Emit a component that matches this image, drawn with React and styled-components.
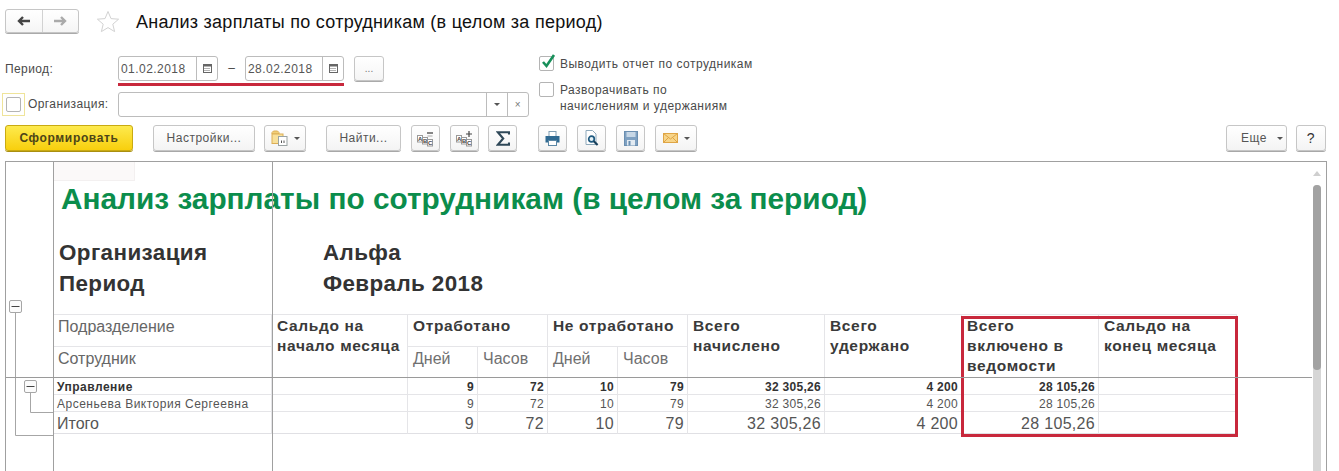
import React from "react";
import styled, { createGlobalStyle } from "styled-components";

const Global = createGlobalStyle`
  html, body { margin: 0; padding: 0; background: #fff; }
  body { font-family: "Liberation Sans", Arial, sans-serif; color: #444; overflow: hidden; }
  #root { height: 471px; overflow: hidden; }
  * { box-sizing: border-box; }
`;

const Page = styled.div`
  width: 1339px;
  height: 471px;
  overflow: hidden;
`;

const Header = styled.header`
  display: flex;
  align-items: center;
  height: 24px;
  margin: 9px 0 0 5px;
`;
const NavGroup = styled.div`
  display: flex;
  width: 74px;
  height: 24px;
  border: 1px solid #c6c6c6;
  border-radius: 3px;
  box-shadow: 0 1px 0 #aaa;
  background: linear-gradient(#fff, #f5f5f5);
`;
const NavButton = styled.div`
  flex: 1;
  display: flex;
  align-items: center;
  justify-content: center;
  & + & { border-left: 1px solid #d2d2d2; }
`;
const StarSlot = styled.div`
  display: flex;
  margin-left: 17px;
  width: 24px;
`;
const PageTitle = styled.h1`
  margin: 3px 0 0 16px;
  font-size: 18px;
  font-weight: 400;
  color: #111;
  letter-spacing: 0.26px;
`;

const Form = styled.section`
  display: flex;
  height: 60px;
  margin-top: 23px;
`;
const FormLeft = styled.div`
  width: 529px;
  margin-left: 2px;
`;
const FieldRow = styled.div`
  display: flex;
  align-items: flex-start;
  height: 26px;
`;
const OrgRow = styled(FieldRow)`
  align-items: center;
  margin-top: 10px;
  height: 24px;
`;
const Label = styled.span`
  font-size: 12px;
  letter-spacing: 0.4px;
  color: #4a4a4a;
`;
const PeriodLabel = styled(Label)`
  width: 116px;
  padding: 6px 0 0 3px;
`;
const DateRange = styled.div`
  display: flex;
  align-items: flex-start;
  height: 30px;
  border-bottom: 3px solid #c8283c;
  width: 226px;
`;
const FieldBox = styled.div`
  display: flex;
  height: 25px;
  width: ${(p) => p.$w}px;
  border: 1px solid #bcbcbc;
  border-radius: 3px;
  background: #fff;
  font-size: 12px;
  letter-spacing: 0.45px;
  color: #555;
`;
const FieldText = styled.div`
  flex: 1;
  display: flex;
  align-items: center;
  padding-left: 2px;
`;
const FieldAddon = styled.div`
  width: 21px;
  display: flex;
  align-items: center;
  justify-content: center;
  border-left: 1px solid #bcbcbc;
  color: #777;
  font-size: 10px;
`;
const Dash = styled.span`
  width: 27px;
  line-height: 25px;
  text-align: center;
  font-size: 12px;
  color: #444;
`;
const MoreButton = styled.div`
  margin-left: 10px;
  width: 30px;
  height: 25px;
  display: flex;
  align-items: center;
  justify-content: center;
  border: 1px solid #c6c6c6;
  border-radius: 3px;
  box-shadow: 0 1px 0 #aaa;
  background: linear-gradient(#fff, #f5f5f5);
  font-size: 10px;
  color: #777;
`;
const UseBox = styled.div`
  width: 23px;
  height: 23px;
  display: flex;
  align-items: center;
  justify-content: center;
  border: 1px solid #efe49a;
`;
const Check = styled.div`
  width: 15px;
  height: 15px;
  border: 1px solid #b4b4b4;
  border-radius: 2px;
  background: #fff;
  position: relative;
  flex: none;
`;
const CheckMark = styled.svg`
  position: absolute;
  left: 0;
  top: -4px;
`;
const OrgLabel = styled(Label)`
  width: 93px;
  padding-left: 3px;
`;

const FormRight = styled.div`
  margin-left: 8px;
`;
const CheckRow = styled.div`
  display: flex;
  align-items: flex-start;
  gap: 6px;
  font-size: 12px;
  letter-spacing: 0.48px;
  line-height: 16px;
  color: #4a4a4a;
  margin-top: ${(p) => p.$mt || 0}px;
`;

const Toolbar = styled.div`
  display: flex;
  align-items: stretch;
  height: 26px;
  margin: 9px 0 0 5px;
  width: 1321px;
`;
const Button = styled.div`
  display: flex;
  align-items: center;
  justify-content: center;
  gap: 6px;
  width: ${(p) => p.$w}px;
  margin-left: ${(p) => p.$ml || 0}px;
  border: 1px solid #c6c6c6;
  border-radius: 3px;
  box-shadow: 0 1px 0 #a8a8a8;
  background: linear-gradient(#fff, #f4f4f4);
  font-size: 12px;
  letter-spacing: 0.5px;
  color: #555;
`;
const PrimaryButton = styled(Button)`
  border-color: #c9aa12;
  box-shadow: 0 1px 0 #a98f10;
  background: linear-gradient(#fdea4e, #f8cf0d);
  color: #4c4418;
  font-weight: 700;
  letter-spacing: 0.65px;
`;
const MoreMenuButton = styled(Button)`
  gap: 10px;
  padding-left: 11px;
`;
const Spacer = styled.div`
  flex: 1;
`;
const Caret = styled.span`
  width: 0;
  height: 0;
  border-left: 3px solid transparent;
  border-right: 3px solid transparent;
  border-top: 3px solid #555;
`;
const HelpButton = styled(Button)`
  font-size: 14px;
  color: #333;
`;

const Panel = styled.section`
  position: relative;
  display: flex;
  width: 1322px;
  height: 320px;
  margin: 10px 0 0 5px;
  border: 1px solid #a0a0a0;
  border-bottom: 0;
`;
const HeaderRule = styled.div`
  position: absolute;
  left: 0;
  top: 215px;
  width: 1306px;
  height: 1px;
  background: #9a9a9a;
`;
const Gutter = styled.div`
  width: 48px;
  flex: none;
  border-right: 1px solid #a0a0a0;
`;
const Sheet = styled.div`
  position: relative;
  flex: 1;
`;
const ColumnGuide = styled.div`
  position: absolute;
  left: 218px;
  top: 0;
  bottom: 0;
  width: 1px;
  background: #a0a0a0;
`;
const CornerCell = styled.div`
  width: 81px;
  height: 19px;
  background: #fbf9f9;
  border-bottom: 1px solid #f3f0f0;
  border-right: 1px solid #f3f0f0;
`;
const ReportTitle = styled.h2`
  margin: 0;
  padding-left: 7px;
  font-size: 29.8px;
  line-height: 36px;
  font-weight: 700;
  color: #0b8d4c;
  white-space: nowrap;
`;
const Info = styled.div`
  margin: 20px 0 15px;
`;
const InfoRow = styled.div`
  display: grid;
  grid-template-columns: 264px auto;
  padding-left: 5px;
  height: 31px;
  align-items: center;
  font-size: 22.4px;
  font-weight: 700;
  letter-spacing: 0.4px;
  color: #333;
`;
const Table = styled.div`
  display: grid;
  grid-template-columns: 218px 136px 70px 70px 70px 70px 137px 137px 137px 138px;
  grid-template-rows: 32px 31px 17px 17px 23px;
  width: 1183px;
`;
const Cell = styled.div`
  border-top: 1px solid ${(p) => (p.$strong ? "#9a9a9a" : "#e5e5e8")};
  border-right: 1px solid #e5e5e8;
  ${(p) => p.$last && "border-bottom: 1px solid #e0e0e4;"}
  ${(p) => p.$span && `grid-column: span ${p.$span};`}
  ${(p) => p.$rowSpan && `grid-row: span ${p.$rowSpan};`}
  overflow: hidden;
  white-space: nowrap;
`;
const Axis = styled(Cell)`
  padding: 2px 0 0 4px;
  font-size: 16px;
  line-height: 20px;
  color: #666;
`;
const Head = styled(Cell)`
  padding: 1px 0 0 5px;
  font-size: 15.5px;
  line-height: 20px;
  font-weight: 700;
  letter-spacing: 0.65px;
  color: #3a3a3a;
  white-space: pre-line;
`;
const SubHead = styled(Cell)`
  padding: 2px 0 0 5px;
  font-size: 16px;
  line-height: 20px;
  color: #707070;
`;
const RowName = styled(Cell)`
  padding: 1px 0 0 3px;
  font-size: ${(p) => p.$size}px;
  font-weight: ${(p) => (p.$bold ? 700 : 400)};
  line-height: ${(p) => p.$lh}px;
  letter-spacing: ${(p) => (p.$size > 13 ? 0 : 0.5)}px;
  color: ${(p) => (p.$bold ? "#333" : "#555")};
`;
const Num = styled(Cell)`
  padding: 1px 3px 0 0;
  text-align: right;
  font-size: ${(p) => p.$size}px;
  font-weight: ${(p) => (p.$bold ? 700 : 400)};
  line-height: ${(p) => p.$lh}px;
  letter-spacing: 0.3px;
  color: ${(p) => (p.$bold ? "#333" : "#555")};
`;
const Highlight = styled.div`
  position: absolute;
  left: 907px;
  top: 154px;
  width: 277px;
  height: 121px;
  border: 3px solid #c8283c;
  pointer-events: none;
`;
const ScrollColumn = styled.div`
  position: relative;
  width: 15px;
  flex: none;
`;
const ScrollArrow = styled.div`
  position: absolute;
  left: 2px;
  top: 9px;
  border-left: 4px solid transparent;
  border-right: 4px solid transparent;
  border-bottom: 5px solid #cfcfcf;
`;
const ScrollTrack = styled.div`
  position: absolute;
  left: 2px;
  top: 23px;
  bottom: 0;
  width: 8px;
  background: #d6d6d6;
  border-radius: 4px 4px 0 0;
`;
const ScrollThumb = styled.div`
  height: 185px;
  background: #a2a2a2;
  border-radius: 4px;
`;
const TileLetter = styled.text`
  font-family: "Liberation Sans", Arial, sans-serif;
  font-size: 6px;
  font-weight: 700;
  fill: #444;
`;

const ArrowIcon = ({ dir, color }) => (
  <svg width="14" height="10" viewBox="0 0 14 10">
    <path d={dir === "l" ? "M6 1 2 5l4 4M2 5h11" : "M8 1l4 4-4 4M12 5H1"} fill="none" stroke={color} strokeWidth="2.4" />
  </svg>
);
const Star = () => (
  <svg width="24" height="23" viewBox="0 0 24 23">
    <path d="M12 1.5 15 8.6l7.6.6-5.8 5 1.8 7.4L12 17.6l-6.6 4 1.8-7.4-5.8-5L9 8.6z" fill="#fff" stroke="#d2d2d2" />
  </svg>
);
const Calendar = () => (
  <svg width="11" height="11" viewBox="0 0 11 11">
    <rect x="1.5" y="1.5" width="8" height="8" fill="#fff" stroke="#666" />
    <rect x="1" y="1" width="9" height="2.5" fill="#666" />
    <path d="M2.5 5.5h6M2.5 7.5h6" stroke="#666" strokeDasharray="1 1" />
  </svg>
);
const ReportFolder = () => (
  <svg width="17" height="16" viewBox="0 0 17 16">
    <path d="M1 4V2.5L2.5 1h4L8 2.5V4z" fill="#f1cf78" stroke="#dcae55" />
    <rect x="1" y="4" width="11" height="9.5" fill="#f8e09a" stroke="#dcae55" />
    <rect x="7.5" y="6.5" width="8.5" height="9" fill="#fff" stroke="#9aa3a3" />
    <path d="M10.5 13v-2.5M13 13v-2.5" stroke="#555" />
  </svg>
);
const AbcIcon = ({ plus }) => (
  <svg width="17" height="17" viewBox="0 0 17 17">
    <rect x=".5" y="5.5" width="5" height="6.5" fill="#fff" stroke="#9a9a9a" />
    <rect x="5.5" y="7.5" width="5" height="6.5" fill="#fff" stroke="#9a9a9a" />
    <rect x="10.5" y="9.5" width="5" height="6.5" fill="#fff" stroke="#9a9a9a" />
    <TileLetter x="1" y="11">А</TileLetter>
    <TileLetter x="6" y="13">В</TileLetter>
    <TileLetter x="11" y="15">С</TileLetter>
    {plus ? (
      <path d="M10 4h6M13 1v6" stroke="#444" strokeWidth="1.2" />
    ) : (
      <>
        <path d="M10 3h6" stroke="#444" strokeWidth="1.3" />
        <path d="M10.5 6h5" stroke="#aaa" />
      </>
    )}
  </svg>
);
const Sigma = () => (
  <svg width="14" height="15" viewBox="0 0 14 15">
    <path d="M13 3.5V1.3H1.8L7.2 7.5 1.8 13.7H13v-2.2" fill="none" stroke="#2f4858" strokeWidth="2.1" />
  </svg>
);
const Printer = () => (
  <svg width="15" height="15" viewBox="0 0 15 15">
    <rect x="4" y=".5" width="7" height="5" fill="#fff" stroke="#7f9db3" />
    <path d="M.5 5h14v6.5H12V9H3v2.5H.5z" fill="#2f6a92" />
    <rect x="3.5" y="9.5" width="8" height="5" fill="#fff" stroke="#5b87a5" />
  </svg>
);
const Preview = () => (
  <svg width="14" height="16" viewBox="0 0 14 16">
    <path d="M1 .5h6.5L11 4v10.5H1z" fill="#fff" stroke="#8fa9bb" />
    <circle cx="6.5" cy="9" r="2.8" fill="#e4f1f6" stroke="#1f5a80" strokeWidth="1.7" />
    <path d="M8.8 11.2l3.8 3.8" stroke="#173f5a" strokeWidth="2.1" />
  </svg>
);
const Save = () => (
  <svg width="14" height="15" viewBox="0 0 14 15">
    <rect x=".5" y=".5" width="13" height="14" fill="#7fa1c2" stroke="#6b8fb1" />
    <rect x="2.5" y="1" width="9" height="5" fill="#c7d7e6" />
    <rect x="3" y="9" width="8" height="5.5" fill="#e3ebf2" />
    <rect x="4.5" y="10" width="2" height="4.5" fill="#6b8fb1" />
  </svg>
);
const Mail = () => (
  <svg width="15" height="10" viewBox="0 0 15 10">
    <rect x=".5" y=".5" width="14" height="9" fill="#f7d58a" stroke="#dfa545" />
    <path d="M.5.5 7.5 6l7-5.5M.5 9.5 5.5 4.5M14.5 9.5 9.5 4.5" fill="none" stroke="#dfa545" />
  </svg>
);
const Tree = () => (
  <svg width="47" height="310" viewBox="0 0 47 310">
    <g fill="none" stroke="#a6a6a6">
      <path d="M9.5 150v123.5H47" />
      <path d="M24.5 230v20.5H47" />
      <rect x="3.5" y="138.5" width="12" height="12" rx="1.5" fill="#fbfbfb" />
      <rect x="18.5" y="218.5" width="12" height="12" rx="1.5" fill="#fbfbfb" />
    </g>
    <path d="M5.5 144.5h8M20.5 224.5h8" stroke="#444" />
  </svg>
);

const values = ["", "9", "72", "10", "79", "32 305,26", "4 200", "28 105,26", ""];
const rows = [
  { name: "Управление", bold: true, size: 12, lh: 16, strong: true },
  { name: "Арсеньева Виктория Сергеевна", size: 12, lh: 16 },
  { name: "Итого", size: 16, lh: 22, last: true },
];

export default function App() {
  return (
    <Page>
      <Global />
      <Header>
        <NavGroup>
          <NavButton><ArrowIcon dir="l" color="#444" /></NavButton>
          <NavButton><ArrowIcon dir="r" color="#aaa" /></NavButton>
        </NavGroup>
        <StarSlot><Star /></StarSlot>
        <PageTitle>Анализ зарплаты по сотрудникам (в целом за период)</PageTitle>
      </Header>

      <Form>
        <FormLeft>
          <FieldRow>
            <PeriodLabel>Период:</PeriodLabel>
            <DateRange>
              <FieldBox $w={100}>
                <FieldText>01.02.2018</FieldText>
                <FieldAddon><Calendar /></FieldAddon>
              </FieldBox>
              <Dash>–</Dash>
              <FieldBox $w={99}>
                <FieldText>28.02.2018</FieldText>
                <FieldAddon><Calendar /></FieldAddon>
              </FieldBox>
            </DateRange>
            <MoreButton>...</MoreButton>
          </FieldRow>
          <OrgRow>
            <UseBox><Check /></UseBox>
            <OrgLabel>Организация:</OrgLabel>
            <FieldBox $w={411}>
              <FieldText />
              <FieldAddon><Caret /></FieldAddon>
              <FieldAddon>×</FieldAddon>
            </FieldBox>
          </OrgRow>
        </FormLeft>
        <FormRight>
          <CheckRow>
            <Check>
              <CheckMark width="16" height="17" viewBox="0 0 16 17">
                <path d="M3 9l3.5 4L14 2" fill="none" stroke="#17905a" strokeWidth="2.6" />
              </CheckMark>
            </Check>
            <span>Выводить отчет по сотрудникам</span>
          </CheckRow>
          <CheckRow $mt={10}>
            <Check />
            <span>Разворачивать по<br />начислениям и удержаниям</span>
          </CheckRow>
        </FormRight>
      </Form>

      <Toolbar>
        <PrimaryButton $w={128}>Сформировать</PrimaryButton>
        <Button $w={102} $ml={20}>Настройки...</Button>
        <Button $w={42} $ml={9}><ReportFolder /><Caret /></Button>
        <Button $w={75} $ml={20}>Найти...</Button>
        <Button $w={29} $ml={10}><AbcIcon /></Button>
        <Button $w={29} $ml={10}><AbcIcon plus /></Button>
        <Button $w={29} $ml={9}><Sigma /></Button>
        <Button $w={29} $ml={21}><Printer /></Button>
        <Button $w={29} $ml={10}><Preview /></Button>
        <Button $w={29} $ml={10}><Save /></Button>
        <Button $w={42} $ml={10}><Mail /><Caret /></Button>
        <Spacer />
        <MoreMenuButton $w={61}>Еще<Caret /></MoreMenuButton>
        <HelpButton $w={30} $ml={9}>?</HelpButton>
      </Toolbar>

      <Panel>
        <Gutter><Tree /></Gutter>
        <Sheet>
          <CornerCell />
          <ReportTitle>Анализ зарплаты по сотрудникам (в целом за период)</ReportTitle>
          <Info>
            <InfoRow><span>Организация</span><span>Альфа</span></InfoRow>
            <InfoRow><span>Период</span><span>Февраль 2018</span></InfoRow>
          </Info>
          <Table>
            <Axis>Подразделение</Axis>
            <Head $rowSpan={2}>{"Сальдо на\nначало месяца"}</Head>
            <Head $span={2}>Отработано</Head>
            <Head $span={2}>Не отработано</Head>
            <Head $rowSpan={2}>{"Всего\nначислено"}</Head>
            <Head $rowSpan={2}>{"Всего\nудержано"}</Head>
            <Head $rowSpan={2}>{"Всего\nвключено в\nведомости"}</Head>
            <Head $rowSpan={2}>{"Сальдо на\nконец месяца"}</Head>
            <Axis>Сотрудник</Axis>
            <SubHead>Дней</SubHead>
            <SubHead>Часов</SubHead>
            <SubHead>Дней</SubHead>
            <SubHead>Часов</SubHead>
            {rows.map((r) => (
              <React.Fragment key={r.name}>
                <RowName $bold={r.bold} $size={r.size} $lh={r.lh} $strong={r.strong} $last={r.last}>{r.name}</RowName>
                {values.map((n, i) => (
                  <Num key={i} $bold={r.bold} $size={r.size} $lh={r.lh} $strong={r.strong} $last={r.last}>{n}</Num>
                ))}
              </React.Fragment>
            ))}
          </Table>
          <ColumnGuide />
          <Highlight />
        </Sheet>
        <ScrollColumn>
          <ScrollArrow />
          <ScrollTrack><ScrollThumb /></ScrollTrack>
        </ScrollColumn>
        <HeaderRule />
      </Panel>
    </Page>
  );
}
